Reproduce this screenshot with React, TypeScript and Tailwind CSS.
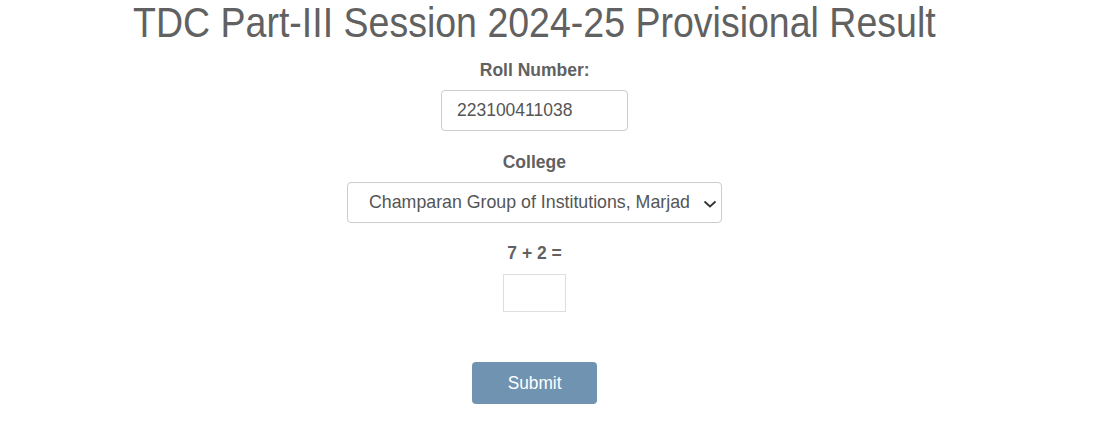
import React from "react";

export default function App() {
  return (
    <div className="w-[1069px] bg-white" style={{ fontFamily: '"Liberation Sans", Arial, sans-serif' }}>
      <div className="flex flex-col items-center text-[#616161]">
        <h1 className="text-[42px] leading-[46px] font-normal whitespace-nowrap">
          <span className="inline-block scale-x-[0.893]">TDC Part-III Session 2024-25 Provisional Result</span>
        </h1>
        <label className="mt-[13px] text-[19px] leading-[22px] font-bold whitespace-nowrap">
          <span className="inline-block scale-x-[0.92]">Roll Number:</span>
        </label>
        <div className="mt-[9px] w-[187px] h-[41px] border border-[#cccccc] rounded-[4px] flex items-center pl-[15px] text-[19px] text-[#555]">
          <span className="inline-block origin-left scale-x-[0.92]">223100411038</span>
        </div>
        <label className="mt-[20px] text-[19px] leading-[22px] font-bold whitespace-nowrap">
          <span className="inline-block scale-x-[0.92]">College</span>
        </label>
        <div className="mt-[9px] w-[375px] h-[41px] border border-[#cccccc] rounded-[4px] flex items-center pl-[21px] pr-[3px] text-[19px] text-[#555]">
          <div className="w-[321px] overflow-hidden whitespace-nowrap">
            <span className="inline-block origin-left scale-x-[0.935]">Champaran Group of Institutions, Marjadpur</span>
          </div>
          <svg className="ml-auto mt-[2px]" width="16" height="10" viewBox="0 0 16 10">
            <path d="M2.5 2.5 L8 7.5 L13.5 2.5" fill="none" stroke="#333" strokeWidth="1.8" />
          </svg>
        </div>
        <label className="mt-[19px] text-[19px] leading-[22px] font-bold whitespace-nowrap">
          <span className="inline-block scale-x-[0.92]">7 + 2 =</span>
        </label>
        <div className="mt-[10px] w-[63px] h-[38px] border border-[#dedede]" />
        <button className="mt-[50px] w-[125px] h-[42px] rounded-[4px] bg-[#7193b2] text-white text-[19px]">
          <span className="inline-block scale-x-[0.91]">Submit</span>
        </button>
      </div>
    </div>
  );
}
